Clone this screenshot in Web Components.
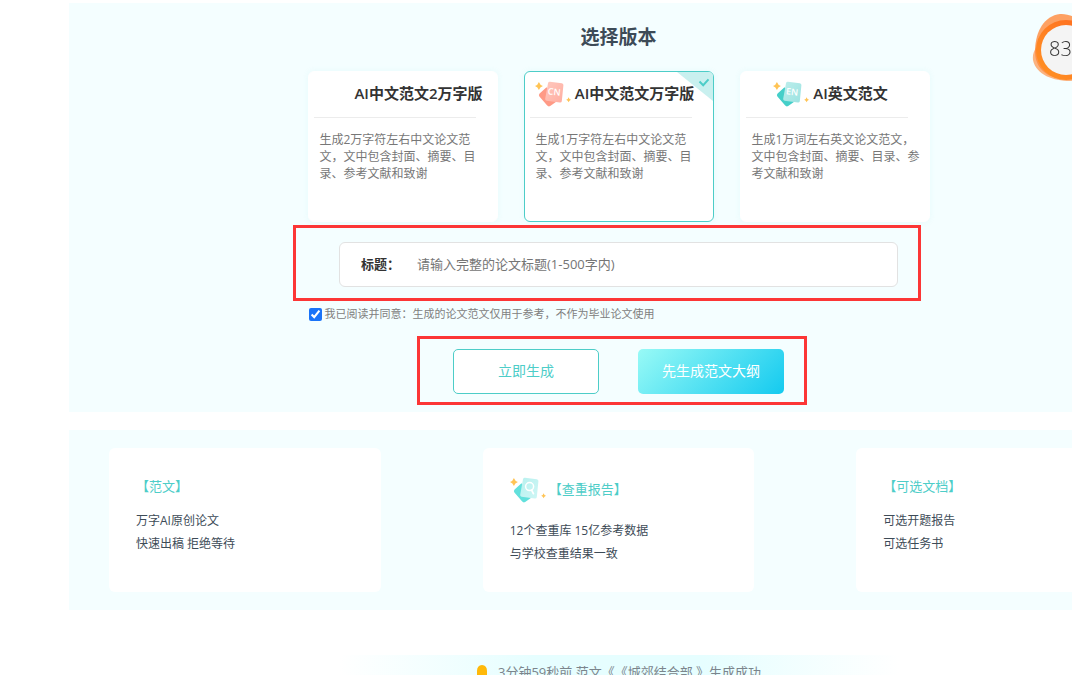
<!DOCTYPE html>
<html lang="zh-CN">
<head>
<meta charset="utf-8">
<title>选择版本</title>
<style>
  html, body { margin: 0; background: #fff; overflow-x: clip; }
  body { font-family: "Open Sans", "Noto Sans CJK SC", sans-serif; color: #3d4b57; }
</style>
</head>
<body>
<paper-page></paper-page>

<template id="t-spark-icon">
  <style>
    :host { display: block; flex: none; width: 36px; height: 30px; }
    svg { display: block; width: 100%; height: 100%; }
    text { font: 600 9px "Open Sans", sans-serif; fill: #fff; }
  </style>
  <svg viewBox="0 0 36 30" aria-hidden="true">
    <defs>
      <linearGradient id="front" x1="0" y1="0" x2="1" y2="1">
        <stop class="a" offset="0"/><stop class="b" offset="1"/>
      </linearGradient>
    </defs>
    <path class="back" d="M4.6 13.6 L11.5 7.2 L23 20.5 L15.2 25.9 Q13.6 27 12.2 25.6 L4.4 16.4 Q3.2 15 4.6 13.6Z"/>
    <path fill="url(#front)" d="M15 1.8 L26.8 3.2 Q28.6 3.5 28.4 5.2 L26.8 21.2 Q26.5 22.8 24.8 22.6 L11.6 20.8 Q9.9 20.5 10.2 18.8 L13 3.2 Q13.4 1.6 15 1.8Z"/>
    <path fill="#ffc455" d="M3.9 2 Q4.9 5 7.9 6 Q4.9 7 3.9 10 Q2.9 7 0 6 Q2.9 5 3.9 2Z"/>
    <path fill="#ffc455" d="M33.6 17.2 Q34.2 19.2 36 19.7 Q34.2 20.2 33.6 22.2 Q33 20.2 31.2 19.7 Q33 19.2 33.6 17.2Z"/>
    <g class="mark"></g>
  </svg>
</template>

<template id="t-version-card">
  <style>
    :host { display: block; position: relative; box-sizing: border-box; min-height: 151px;
      border: 1px solid #fff; border-radius: 6px; background: #fff; padding: 0 5px;
      box-shadow: 0 0 6px rgba(70, 200, 210, .08); }
    :host([selected]) { border-color: #4dcdc8; }
    header { display: flex; align-items: center; justify-content: center; gap: 4px;
      box-sizing: border-box; height: 45px; padding-right: 8px; }
    h3 { margin: 0; padding-bottom: 4px; font-size: 15px; line-height: 20px; font-weight: 600; color: #333; white-space: nowrap; }
    .blank { width: 36px; }
    hr { margin: 0; border: 0; border-top: 1px solid #ececec; width: 162px; }
    p { margin: 13px 0 0 6px; width: 170px; font-size: 12px; line-height: 17px; color: #777; }
    .tick { display: none; position: absolute; top: 0; right: 0; width: 36px; height: 30px; }
    :host([selected]) .tick { display: block; }
  </style>
  <header><slot name="icon"><span class="blank"></span></slot><h3><slot name="title"></slot></h3></header>
  <hr>
  <p><slot></slot></p>
  <svg class="tick" viewBox="0 0 36 30" aria-hidden="true">
    <path fill="#c9f0ef" d="M0 0H31Q36 0 36 5V29Z"/>
    <path fill="none" stroke="#4dcdc8" stroke-width="2" d="M22.5 9.5L26.2 13.2L31.5 7.4"/>
  </svg>
</template>

<template id="t-marked-area">
  <style>
    :host { display: block; position: relative; }
    :host::after { content: ""; position: absolute; inset: var(--frame); border: 3px solid #fc3636; pointer-events: none; }
  </style>
  <slot></slot>
</template>

<template id="t-title-field">
  <style>
    :host { display: flex; align-items: center; box-sizing: border-box; height: 45px; background: #fff;
      border: 1px solid #e2e2e2; border-radius: 6px; padding: 0 21px 2px; font-size: 13px; }
    label { width: 56px; font-weight: 600; color: #333; }
    input { flex: 1; min-width: 0; height: 40px; border: 0; outline: 0; padding: 0; background: none; font: inherit; color: #333; }
    input::placeholder { color: #757575; }
  </style>
  <label for="title">标题：</label><input id="title" type="text" placeholder="请输入完整的论文标题(1-500字内)">
</template>

<template id="t-agree-check">
  <style>
    :host { display: block; font-size: 11px; line-height: 16px; color: #808080; }
    label { display: flex; align-items: center; gap: 3px; }
    input { width: 13px; height: 13px; margin: 0; accent-color: #1a73f8; }
  </style>
  <label><input type="checkbox" checked><span><slot></slot></span></label>
</template>

<template id="t-action-button">
  <style>
    :host { display: block; width: 146px; }
    button { display: block; box-sizing: border-box; width: 100%; height: 45px; padding: 0 0 4px; border: 1px solid #4dcdc8;
      border-radius: 5px; background: #fff; font: inherit; font-size: 14px; color: #4dcdc8; cursor: pointer; }
    :host([primary]) button { border: 0; color: #fff; background: linear-gradient(135deg, #98faf6, #14caef); }
  </style>
  <button type="button"><slot></slot></button>
</template>

<template id="t-info-card">
  <style>
    :host { display: block; box-sizing: border-box; min-height: 144px; padding: 28px 27px 20px; background: #fff; border-radius: 6px; }
    header { display: flex; gap: 3px; }
    h3 { margin: 0; font-size: 13px; line-height: 20px; font-weight: 400; color: #4dcdc8; }
    :host([tall]) h3 { line-height: 26px; }
    p { margin: 13px 0 0; font-size: 12px; line-height: 23px; color: #3d4b57; }
  </style>
  <header><slot name="icon"></slot><h3><slot name="title"></slot></h3></header>
  <p><slot></slot></p>
</template>

<template id="t-news-bar">
  <style>
    :host { display: flex; justify-content: center; align-items: center; gap: 10px; box-sizing: border-box; height: 36px;
      padding-bottom: 2px; max-width: 560px;
      margin: 0 auto; font-size: 13px; line-height: 20px; color: #7b858c; text-spacing-trim: space-all;
      background: linear-gradient(90deg, #fff, #e6feff 35%, #e6feff 65%, #fff); }
    svg { width: 12px; height: 14px; }
  </style>
  <svg viewBox="0 0 12 14" aria-hidden="true"><path fill="#ffb90a" d="M6 0Q11 .5 11 6V10L12 12H0L1 10V6Q1 .5 6 0ZM4 13H8Q6 15 4 13Z"/></svg>
  <span><slot></slot></span>
</template>

<template id="t-score-badge">
  <style>
    :host { display: block; position: fixed; top: 13px; right: -28px; width: 68px; height: 70px; }
    svg { display: block; width: 100%; height: 100%; }
    text { font: 300 20px "Open Sans", sans-serif; fill: #333; }
  </style>
  <svg viewBox="0 0 68 70" aria-label="83">
    <defs><linearGradient id="ring" x1="1" y1="0" x2="0" y2="1"><stop offset="0" stop-color="#ff6a1f"/><stop offset="1" stop-color="#ff9324"/></linearGradient></defs>
    <path fill="#ff8a3c" fill-opacity=".8" d="M28 1C43 0 64 14 66 34C67 52 52 66 34 66C14 66 2 54 3 36C4 18 12 3 28 1Z"/>
    <path fill="#ff8a3c" fill-opacity=".65" d="M10 26C20 10 46 2 60 20C72 38 60 68 38 68C22 68 4 62 1 47C0 38 5 34 10 26Z"/>
    <circle cx="34" cy="37" r="30" fill="url(#ring)"/>
    <circle cx="34" cy="37" r="25" fill="#f4f4f4"/>
    <text x="17" y="43">83</text>
  </svg>
</template>

<template id="t-paper-page">
  <style>
    :host { display: block; }
    main { margin-left: 69px; padding-top: 3px; min-width: 1099px; }
    section { background: #f4feff; }
    .choose { box-sizing: border-box; min-height: 409px; padding: 20px 0 18px; }
    h2 { margin: 0 0 20px; text-align: center; font-size: 19px; line-height: 28px; font-weight: 600; color: #3d4b57; }
    .column { width: 622px; margin: 0 auto; }
    .versions { display: grid; grid-template-columns: repeat(3, minmax(0, 1fr)); gap: 26px; }
    .field { --frame: -17px -23px -14px -46px; width: 559px; margin: 20px auto 0; }
    agree-check { margin: 19px 0 0 1px; }
    .actions { --frame: -13px -23px -11px -36px; width: 331px; margin: 27px auto 0; }
    .row { display: flex; justify-content: space-between; }
    .facts { display: grid; grid-template-columns: repeat(3, 1fr); gap: 102px; margin-top: 18px; padding: 18px 40px; }
    news-bar { margin-top: 45px; }
  </style>
  <main>
    <section class="choose">
      <h2>选择版本</h2>
      <div class="column">
        <div class="versions">
          <version-card><span slot="title">AI中文范文2万字版</span>生成2万字符左右中文论文范文，文中包含封面、摘要、目录、参考文献和致谢</version-card>
          <version-card selected><spark-icon slot="icon" kind="CN"></spark-icon><span slot="title">AI中文范文万字版</span>生成1万字符左右中文论文范文，文中包含封面、摘要、目录、参考文献和致谢</version-card>
          <version-card><spark-icon slot="icon" kind="EN"></spark-icon><span slot="title">AI英文范文</span>生成1万词左右英文论文范文，文中包含封面、摘要、目录、参考文献和致谢</version-card>
        </div>
        <marked-area class="field"><title-field></title-field></marked-area>
        <agree-check>我已阅读并同意：生成的论文范文仅用于参考，不作为毕业论文使用</agree-check>
        <marked-area class="actions"><div class="row"><action-button>立即生成</action-button><action-button primary>先生成范文大纲</action-button></div></marked-area>
      </div>
    </section>
    <section class="facts">
      <info-card><span slot="title">【范文】</span>万字AI原创论文<br>快速出稿 拒绝等待</info-card>
      <info-card tall><spark-icon slot="icon" kind="search"></spark-icon><span slot="title">【查重报告】</span>12个查重库 15亿参考数据<br>与学校查重结果一致</info-card>
      <info-card><span slot="title">【可选文档】</span>可选开题报告<br>可选任务书</info-card>
    </section>
    <news-bar>3分钟59秒前 范文《《城郊结合部 》生成成功</news-bar>
  </main>
  <score-badge></score-badge>
</template>

<script>
  class Base extends HTMLElement {
    constructor() {
      super();
      const t = document.getElementById('t-' + this.localName);
      this.attachShadow({ mode: 'open' }).append(t.content.cloneNode(true));
    }
  }
  const palettes = {
    CN: ['#ff9a86', '#ffc9bf', '#ffada0'],
    EN: ['#45cfc9', '#bdeeec', '#9be3e1'],
    search: ['#62e0dc', '#b9f1ef', '#cdf6f5']
  };
  class SparkIcon extends Base {
    connectedCallback() {
      const kind = this.getAttribute('kind');
      const [back, a, b] = palettes[kind];
      const $ = s => this.shadowRoot.querySelector(s);
      $('.back').setAttribute('fill', back);
      $('.a').setAttribute('stop-color', a);
      $('.b').setAttribute('stop-color', b);
      $('.mark').innerHTML = kind === 'search'
        ? '<circle cx="19.6" cy="10.6" r="4" fill="none" stroke="#fff" stroke-width="1.5"/><path d="M21.6 14.2L23.4 17.6" stroke="#fff" stroke-width="1.8" stroke-linecap="round"/>'
        : '<text x="19.2" y="15" text-anchor="middle" transform="rotate(6 19 12)">' + kind + '</text>';
    }
  }
  customElements.define('spark-icon', SparkIcon);
  for (const name of ['version-card', 'marked-area', 'title-field', 'agree-check', 'action-button', 'info-card', 'news-bar', 'score-badge', 'paper-page'])
    customElements.define(name, class extends Base {});
</script>
</body>
</html>
